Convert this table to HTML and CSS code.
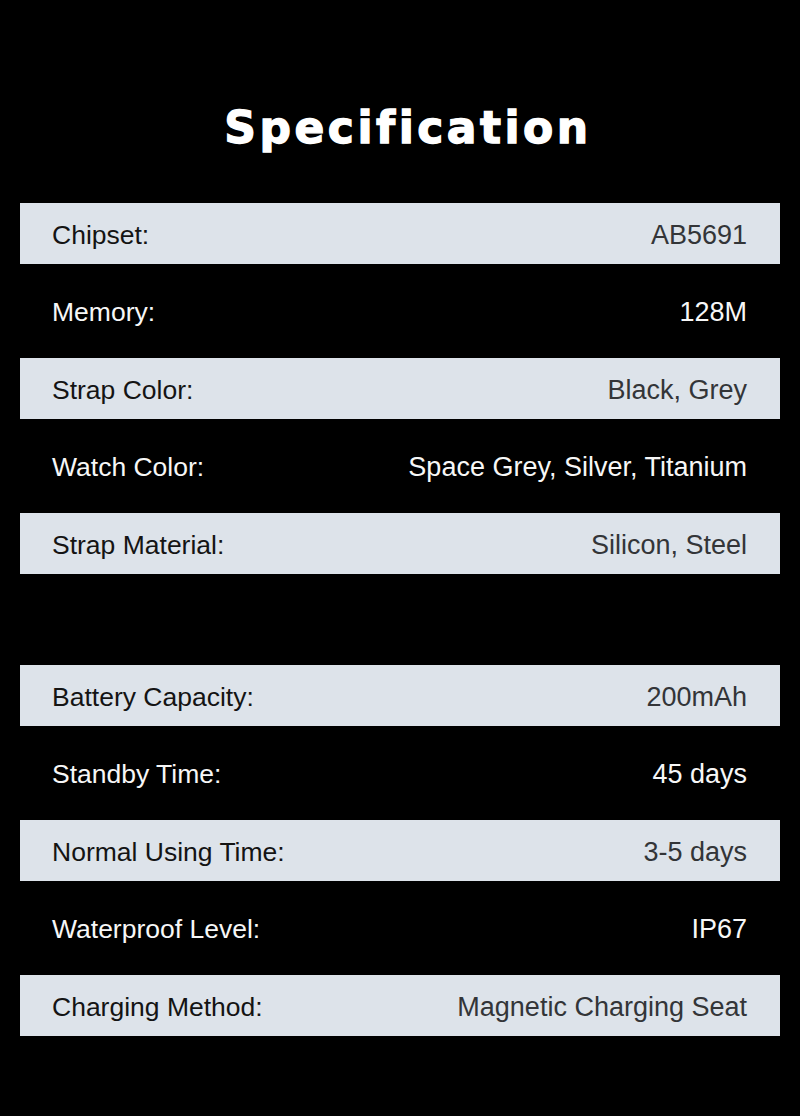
FILE: index.html
```html
<!DOCTYPE html>
<html lang="en">
<head>
<meta charset="utf-8">
<title>Specification</title>
<link rel="stylesheet" href="styles.css">
</head>
<body>
<main class="page">
  <h1 class="title">Specification</h1>
  <section class="group">
    <div class="row light"><span class="label">Chipset:</span><span class="value">AB5691</span></div>
    <div class="row dark"><span class="label">Memory:</span><span class="value">128M</span></div>
    <div class="row light"><span class="label">Strap Color:</span><span class="value">Black, Grey</span></div>
    <div class="row dark"><span class="label">Watch Color:</span><span class="value">Space Grey, Silver, Titanium</span></div>
    <div class="row light"><span class="label">Strap Material:</span><span class="value">Silicon, Steel</span></div>
  </section>
  <section class="group">
    <div class="row light"><span class="label">Battery Capacity:</span><span class="value">200mAh</span></div>
    <div class="row dark"><span class="label">Standby Time:</span><span class="value">45 days</span></div>
    <div class="row light"><span class="label">Normal Using Time:</span><span class="value">3-5 days</span></div>
    <div class="row dark"><span class="label">Waterproof Level:</span><span class="value">IP67</span></div>
    <div class="row light"><span class="label">Charging Method:</span><span class="value">Magnetic Charging Seat</span></div>
  </section>
</main>
</body>
</html>
```
FILE: styles.css
```css
html, body {
  margin: 0;
  padding: 0;
  background: #000;
}
.page {
  width: 800px;
  height: 1116px;
  box-sizing: border-box;
  padding: 104px 20px 0;
  display: flex;
  flex-direction: column;
  gap: 91px;
  font-family: "Liberation Sans", Arial, sans-serif;
}
.title {
  margin: 0 0 -38.5px;
  padding: 2px 0 0 16px;
  font-family: "DejaVu Sans", "Open Sans", sans-serif;
  font-weight: 700;
  font-size: 44px;
  line-height: 44px;
  letter-spacing: 3.5px;
  text-align: center;
  color: #fff;
  -webkit-text-stroke: 1.3px #fff;
}
.group {
  display: flex;
  flex-direction: column;
}
.row {
  display: flex;
  justify-content: space-between;
  align-items: center;
  padding: 4px 33px 0 32px;
  box-sizing: border-box;
  font-size: 27px;
}
.row .label { font-size: 26.5px; }
.row.light {
  height: 61px;
  background: #dde3ea;
}
.row.light .label { color: #141414; }
.row.light .value { color: #333538; }
.row.dark {
  height: 94px;
  color: #f7f7f7;
}
```
